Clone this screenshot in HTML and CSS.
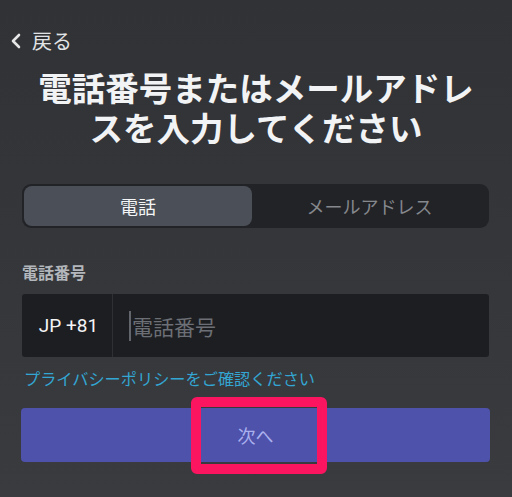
FILE: index.html
```html
<!DOCTYPE html>
<html lang="ja">
<head>
<meta charset="utf-8">
<link rel="stylesheet" href="styles.css">
</head>
<body>
<div class="screen">
  <div class="back">
    <svg class="chev" width="12" height="16" viewBox="0 0 12 16"><polyline points="9,2 3,8 9,14" fill="none" stroke="#e6e6e6" stroke-width="2.6" stroke-linecap="round" stroke-linejoin="round"/></svg>
    <span class="back-text">戻る</span>
  </div>
  <h1 class="title"><span class="line">電話番号またはメールアドレ</span><span class="line">スを入力してください</span></h1>
  <div class="content">
    <div class="segment">
      <div class="tab active">電話</div>
      <div class="tab">メールアドレス</div>
    </div>
    <div class="label">電話番号</div>
    <div class="input">
      <div class="code">JP +81</div>
      <div class="field"><span class="cursor"></span><span class="placeholder">電話番号</span></div>
    </div>
    <div class="privacy">プライバシーポリシーをご確認ください</div>
    <div class="next">
      <span>次へ</span>
      <div class="highlight"></div>
    </div>
  </div>
</div>
</body>
</html>
```
FILE: styles.css
```css
html, body {
  margin: 0;
  padding: 0;
}
body {
  width: 512px;
  height: 497px;
  overflow: hidden;
  background: linear-gradient(180deg, #303236 0%, #35373b 60%, #393b3f 100%);
  font-family: "Noto Sans CJK JP", "Noto Sans", sans-serif;
  color: #fff;
}
.screen {
  display: flex;
  flex-direction: column;
}
.back {
  display: flex;
  align-items: center;
  height: 24px;
  margin-top: 29px;
  padding-left: 10px;
  gap: 10px;
}
.chev {
  display: block;
}
.back-text {
  font-size: 20px;
  line-height: 24px;
  color: #e2e3e5;
}
.title {
  margin: 14px 0 0;
  text-align: center;
  font-size: 33.5px;
  font-weight: 700;
  color: #f2f3f5;
  display: flex;
  flex-direction: column;
  align-items: center;
}
.title .line {
  display: block;
  height: 40px;
  line-height: 40px;
  white-space: nowrap;
}
.content {
  padding: 0 23px 0 22px;
  display: flex;
  flex-direction: column;
}
.segment {
  margin-top: 37px;
  height: 44px;
  box-sizing: border-box;
  padding: 2px;
  background: #222327;
  border-radius: 9px;
  display: flex;
}
.tab {
  flex: 1;
  display: flex;
  align-items: center;
  justify-content: center;
  font-size: 18px;
  color: #85888d;
  border-radius: 8px;
}
.tab.active {
  background: #4b5058;
  color: #f4f5f6;
  flex: 0 0 228px;
}
.label {
  margin-top: 34px;
  height: 20px;
  line-height: 20px;
  font-size: 16px;
  font-weight: 700;
  color: #b3b6bb;
}
.input {
  margin-top: 12px;
  height: 63px;
  background: #1d1e21;
  border-radius: 3px;
  display: flex;
  align-items: stretch;
}
.code {
  width: 91px;
  border-right: 1px solid #2e3034;
  display: flex;
  align-items: center;
  justify-content: center;
  font-family: Roboto, "Noto Sans", sans-serif;
  font-size: 19px;
  color: #f4f4f5;
  padding-left: 3px;
  box-sizing: border-box;
}
.field {
  flex: 1;
  display: flex;
  align-items: center;
  padding-left: 16px;
}
.cursor {
  width: 2px;
  height: 30px;
  background: #62656b;
  margin-right: 1px;
}
.placeholder {
  font-size: 21px;
  color: #6c6f75;
}
.privacy {
  margin-top: 11px;
  height: 20px;
  line-height: 20px;
  font-size: 16.2px;
  color: #33a6d3;
  padding-left: 2px;
}
.next {
  position: relative;
  margin-top: 20px;
  margin-left: -1px;
  margin-right: -1px;
  height: 54px;
  background: #4e52ab;
  border-radius: 4px;
  display: flex;
  align-items: center;
  justify-content: center;
  font-size: 18px;
  color: #aab0ee;
}
.highlight {
  position: absolute;
  left: 170px;
  top: -11px;
  width: 136px;
  height: 77px;
  box-sizing: border-box;
  border: 10px solid #fb1561;
  border-radius: 6px;
}
```
